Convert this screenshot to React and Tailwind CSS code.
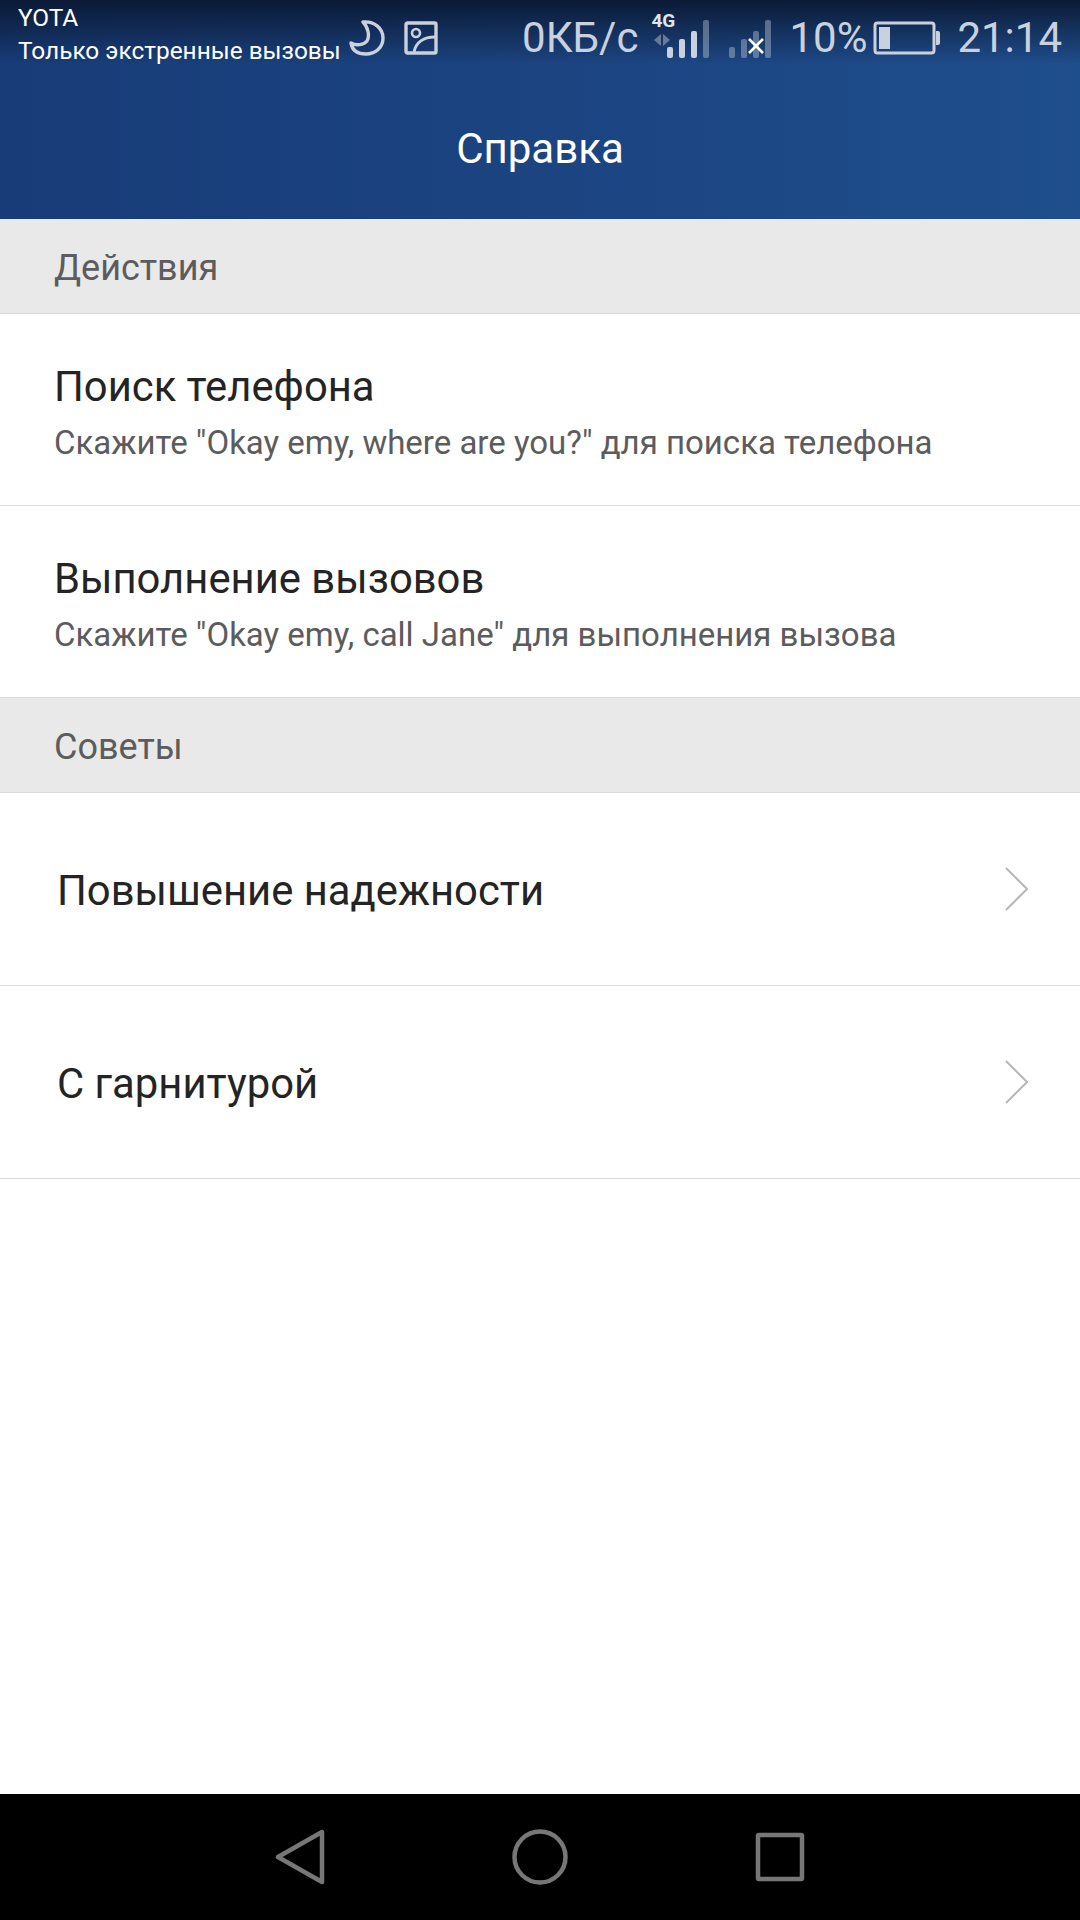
const SignalBars = ({ dim }) => (
  <svg width="44" height="38" viewBox="0 0 44 38" className="block">
    <rect x="0" y="27" width="6" height="11" rx="2" fill="#c9d1de" opacity={dim ? 0.4 : 1} />
    <rect x="12" y="19" width="6" height="19" rx="2" fill="#c9d1de" opacity={dim ? 0.4 : 1} />
    <rect x="24" y="11" width="6" height="27" rx="2" fill="#c9d1de" opacity={dim ? 0.4 : 1} />
    <rect x="36" y="0" width="6" height="38" rx="2" fill="#c9d1de" opacity="0.4" />
  </svg>
);

const StatusBar = () => (
  <div className="flex h-[70px] items-start justify-between px-[18px]">
    <div className="flex items-start">
      <div className="w-[331px] pt-[1px] text-[24.4px] leading-[33px] text-white">
        <div>YOTA</div>
        <div className="whitespace-nowrap">Только экстренные вызовы</div>
      </div>
      <div className="flex items-center gap-[19px] pt-[20px]">
        <svg width="36" height="36" viewBox="0 0 36 36" fill="none" stroke="#c9d1de" strokeWidth="3.4" strokeLinejoin="round">
          <path d="M14 2c11-1 20 6 20 16S26 34 17 34 3 30 2 23c5 3 13 2 16-2 3-5 1-14-4-19z" />
        </svg>
        <svg width="34" height="34" viewBox="0 0 34 34" fill="none" stroke="#c9d1de" strokeWidth="3.4">
          <rect x="2" y="2" width="30" height="30" rx="1.5" />
          <circle cx="12" cy="12" r="4" strokeWidth="2.6" />
          <path d="M10 31c2-10 10-15 21-15" strokeWidth="2.8" />
        </svg>
      </div>
    </div>
    <div className="flex items-center pt-[16px] text-[42px] leading-[44px] text-[#c9d1de]">
      <span>0КБ/с</span>
      <div className="relative ml-[13px] h-[44px] w-[58px]">
        <span className="absolute left-0 top-[-6px] text-[19px] font-bold leading-[22px] text-[#dfe4ec]">4G</span>
        <svg width="16" height="12" viewBox="0 0 16 12" className="absolute left-[3px] top-[18px]">
          <path d="M7 0v12L0 6zM9 0l7 6-7 6z" fill="#c9d1de" opacity="0.45" />
        </svg>
        <div className="absolute left-[16px] top-[4px]">
          <SignalBars />
        </div>
      </div>
      <div className="relative ml-[20px] h-[44px] w-[44px]">
        <div className="absolute left-0 top-[4px]">
          <SignalBars dim />
        </div>
        <svg width="18" height="18" viewBox="0 0 18 18" stroke="#ffffff" strokeWidth="2.6" className="absolute left-[18px] top-[21px]">
          <path d="M2 2l14 14M16 2L2 16" />
        </svg>
      </div>
      <span className="ml-[16px]">10%</span>
      <svg width="68" height="34" viewBox="0 0 68 34" fill="none" className="ml-[6px]">
        <rect x="2" y="2" width="59" height="30" rx="2.5" stroke="#c9d1de" strokeWidth="3" />
        <rect x="6" y="6" width="11" height="22" fill="#c9d1de" />
        <path d="M63 10h2a2 2 0 0 1 2 2v10a2 2 0 0 1-2 2h-2z" fill="#c9d1de" />
      </svg>
      <span className="ml-[16px]">21:14</span>
    </div>
  </div>
);

const SectionHeader = ({ label }) => (
  <div className="flex h-[95px] items-center border-b border-[#d9d9d9] bg-[#e9e9e9] pl-[54px] pt-[3px] text-[36px] text-[#5c5c5c]">
    {label}
  </div>
);

const ActionRow = ({ title, hint }) => (
  <div className="flex h-[192px] flex-col justify-center border-b border-[#dcdcdc] pl-[54px] pt-[4px]">
    <div className="text-[41.8px] leading-[52px] text-[#242424]">{title}</div>
    <div className="mt-[10px] text-[33px] leading-[40px] text-[#5c5c5c]">{hint}</div>
  </div>
);

const LinkRow = ({ title }) => (
  <div className="flex h-[193px] items-center justify-between border-b border-[#dcdcdc] pl-[57px] pr-[52px] text-[41.8px] text-[#242424]">
    <span className="pt-[4px]">{title}</span>
    <svg width="24" height="44" viewBox="0 0 24 44" fill="none" stroke="#b8b8b8" strokeWidth="2">
      <path d="M2 1l21 21L2 43" />
    </svg>
  </div>
);

export default function App() {
  return (
    <div className="flex h-[1920px] w-[1080px] flex-col bg-white font-['Roboto',sans-serif]">
      <header className="h-[219px] bg-[linear-gradient(180deg,#0a1730f0_0px,#0a173000_64px),linear-gradient(90deg,#183c78_0%,#1b4481_50%,#1f4e8d_100%)]">
        <StatusBar />
        <div className="pt-[43px] text-center text-[42px] leading-[72px] text-white">Справка</div>
      </header>

      <main className="flex-1">
        <SectionHeader label="Действия" />
        <ActionRow title="Поиск телефона" hint={'Скажите "Okay emy, where are you?" для поиска телефона'} />
        <ActionRow title="Выполнение вызовов" hint={'Скажите "Okay emy, call Jane" для выполнения вызова'} />
        <SectionHeader label="Советы" />
        <LinkRow title="Повышение надежности" />
        <LinkRow title="С гарнитурой" />
      </main>

      <nav className="flex h-[126px] items-center justify-center gap-[187px] bg-black">
        <svg width="50" height="56" viewBox="0 0 50 56" fill="none" stroke="#777777" strokeWidth="4.5" strokeLinejoin="round">
          <path d="M47 3v50L3 28z" />
        </svg>
        <svg width="56" height="56" viewBox="0 0 56 56" fill="none" stroke="#777777" strokeWidth="4.5">
          <circle cx="28" cy="28" r="25.5" />
        </svg>
        <svg width="50" height="50" viewBox="0 0 50 50" fill="none" stroke="#777777" strokeWidth="4.5" strokeLinejoin="round">
          <rect x="3" y="3" width="44" height="44" rx="1" />
        </svg>
      </nav>
    </div>
  );
}
